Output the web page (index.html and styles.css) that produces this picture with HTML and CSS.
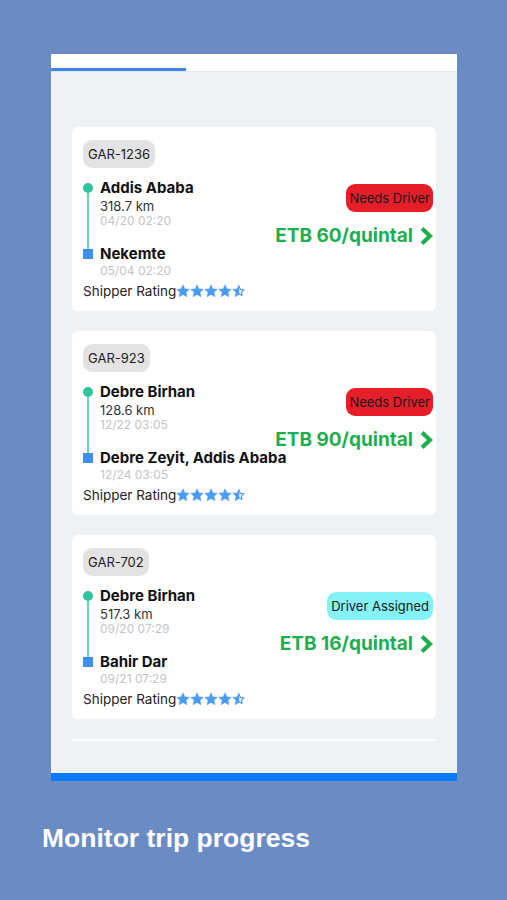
FILE: index.html
```html
<!DOCTYPE html>
<html>
  <head>
    <title>Monitor trip progress</title>
    <link rel="stylesheet" href="styles.css">
  </head>
  <body>
    <svg width="0" height="0" class="defs">
      <defs>
        <symbol id="star" viewBox="0 0 24 24">
          <path d="M12 1.5l3.2 6.9 7.5.8-5.6 5.1 1.6 7.4L12 17.9l-6.6 3.8 1.6-7.4-5.6-5.1 7.5-.8z" />
        </symbol>
        <symbol id="half-star" viewBox="0 0 24 24">
          <path d="M12 1.5v16.4l-6.6 3.8 1.6-7.4-5.6-5.1 7.5-.8z" />
          <path d="M12 3.9l2.5 5.4 5.9.6-4.4 4 1.3 5.8L12 16.8" fill="none" stroke-width="2" stroke-linejoin="round" />
        </symbol>
      </defs>
    </svg>

    <div class="screen">
      <div class="tabs">
        <div class="tab-indicator"></div>
      </div>

      <div class="content">
        <div class="trip-card">
          <div class="trip-left">
            <span class="trip-tag">GAR-1236</span>
            <div class="route">
              <div class="route-marks">
                <span class="mark-start"></span>
                <span class="mark-line"></span>
                <span class="mark-end"></span>
              </div>
              <div class="route-stops">
                <div class="stop-name">Addis Ababa</div>
                <div class="stop-km">318.7 km</div>
                <div class="stop-date">04/20 02:20</div>
                <div class="stop-name stop-dest">Nekemte</div>
                <div class="stop-date">05/04 02:20</div>
              </div>
            </div>
            <div class="rating">
              Shipper Rating
              <span class="stars">
                <svg><use href="#star" /></svg><svg><use href="#star" /></svg><svg><use href="#star" /></svg><svg><use href="#star" /></svg><svg><use href="#half-star" /></svg>
              </span>
            </div>
          </div>
          <div class="trip-right">
            <span class="status status-needs">Needs Driver</span>
            <div class="price">
              ETB 60/quintal
              <svg class="chevron" viewBox="0 0 14 20"><polyline points="3,2.5 11,10 3,17.5" /></svg>
            </div>
          </div>
        </div>

        <div class="trip-card">
          <div class="trip-left">
            <span class="trip-tag">GAR-923</span>
            <div class="route">
              <div class="route-marks">
                <span class="mark-start"></span>
                <span class="mark-line"></span>
                <span class="mark-end"></span>
              </div>
              <div class="route-stops">
                <div class="stop-name">Debre Birhan</div>
                <div class="stop-km">128.6 km</div>
                <div class="stop-date">12/22 03:05</div>
                <div class="stop-name stop-dest">Debre Zeyit, Addis Ababa</div>
                <div class="stop-date">12/24 03:05</div>
              </div>
            </div>
            <div class="rating">
              Shipper Rating
              <span class="stars">
                <svg><use href="#star" /></svg><svg><use href="#star" /></svg><svg><use href="#star" /></svg><svg><use href="#star" /></svg><svg><use href="#half-star" /></svg>
              </span>
            </div>
          </div>
          <div class="trip-right">
            <span class="status status-needs">Needs Driver</span>
            <div class="price">
              ETB 90/quintal
              <svg class="chevron" viewBox="0 0 14 20"><polyline points="3,2.5 11,10 3,17.5" /></svg>
            </div>
          </div>
        </div>

        <div class="trip-card">
          <div class="trip-left">
            <span class="trip-tag">GAR-702</span>
            <div class="route">
              <div class="route-marks">
                <span class="mark-start"></span>
                <span class="mark-line"></span>
                <span class="mark-end"></span>
              </div>
              <div class="route-stops">
                <div class="stop-name">Debre Birhan</div>
                <div class="stop-km">517.3 km</div>
                <div class="stop-date">09/20 07:29</div>
                <div class="stop-name stop-dest">Bahir Dar</div>
                <div class="stop-date">09/21 07:29</div>
              </div>
            </div>
            <div class="rating">
              Shipper Rating
              <span class="stars">
                <svg><use href="#star" /></svg><svg><use href="#star" /></svg><svg><use href="#star" /></svg><svg><use href="#star" /></svg><svg><use href="#half-star" /></svg>
              </span>
            </div>
          </div>
          <div class="trip-right">
            <span class="status status-assigned">Driver Assigned</span>
            <div class="price">
              ETB 16/quintal
              <svg class="chevron" viewBox="0 0 14 20"><polyline points="3,2.5 11,10 3,17.5" /></svg>
            </div>
          </div>
        </div>

        <div class="list-end"></div>
      </div>

      <div class="bottom-bar"></div>
    </div>

    <h2 class="caption">Monitor trip progress</h2>
  </body>
</html>
```

FILE: styles.css
```css
/* App store screenshot: trip list */
body {
  margin: 0;
  background-color: #6b8bc3;
  font-family: Inter, "Noto Sans", sans-serif;
  color: #111;
}
.defs {
  position: absolute;
}
.screen {
  width: 406px;
  height: 727px;
  margin: 54px 0 0 51px;
  background-color: #eff2f5;
  display: flex;
  flex-direction: column;
}
.tabs {
  height: 17px;
  background-color: #fff;
  border-bottom: 1px solid #e2e6ea;
  display: flex;
  align-items: flex-end;
}
.tab-indicator {
  width: 135px;
  height: 3px;
  background-color: #3a85e8;
}
.content {
  flex: 1;
  padding: 55px 21px 0;
}
.trip-card {
  display: flex;
  justify-content: space-between;
  height: 184px;
  box-sizing: border-box;
  padding: 13px 3px 12px 11px;
  margin-bottom: 20px;
  background-color: #fff;
  border-radius: 6px;
}
.trip-left {
  flex: 1;
  min-width: 0;
  display: flex;
  flex-direction: column;
  align-items: flex-start;
}
.trip-tag {
  height: 28px;
  line-height: 28px;
  padding: 0 5px;
  border-radius: 9px;
  background-color: #e3e3e3;
  font-size: 13px;
  color: #222;
}
.route {
  display: flex;
  margin-top: 10px;
}
.route-marks {
  width: 17px;
  flex-shrink: 0;
  display: flex;
  flex-direction: column;
  padding: 5px 0 19px;
}
.mark-start {
  width: 10px;
  height: 10px;
  border-radius: 50%;
  background-color: #2fc49a;
}
.mark-line {
  flex: 1;
  width: 2px;
  margin-left: 4px;
  background-color: #66d3b3;
}
.mark-end {
  width: 10px;
  height: 10px;
  background-color: #3d8ef0;
}
.stop-name {
  font-size: 15px;
  font-weight: 700;
  line-height: 20px;
  white-space: nowrap;
}
.stop-dest {
  margin-top: 16px;
}
.stop-km {
  font-size: 13px;
  line-height: 16px;
  color: #333;
}
.stop-date {
  font-size: 12px;
  line-height: 14px;
  color: #c4c4c4;
}
.rating {
  display: flex;
  align-items: center;
  margin-top: 5px;
  font-size: 13.5px;
  line-height: 16px;
  color: #222;
  white-space: nowrap;
}
.stars {
  display: flex;
}
.stars svg {
  width: 14px;
  height: 14px;
  fill: #4a9bf5;
  stroke: #4a9bf5;
}
.trip-right {
  flex-shrink: 0;
  display: flex;
  flex-direction: column;
  align-items: flex-end;
  padding-top: 44px;
}
.status {
  height: 28px;
  line-height: 28px;
  padding: 0 3px;
  border-radius: 9px;
  font-size: 13px;
  color: #1a1a1a;
}
.status-needs {
  background-color: #e61e29;
}
.status-assigned {
  background-color: #84f2f6;
  padding: 0 4px;
}
.price {
  display: flex;
  align-items: center;
  margin-top: 12px;
  line-height: 24px;
  font-size: 19px;
  font-weight: 700;
  color: #1fae4f;
  white-space: nowrap;
}
.chevron {
  width: 14px;
  height: 20px;
  margin-left: 6px;
  fill: none;
  stroke: #1fae4f;
  stroke-width: 4.2;
}
.list-end {
  height: 2px;
  background-color: #fbfcfd;
}
.bottom-bar {
  height: 8px;
  background-color: #0a7aff;
}
.caption {
  margin: 43px 0 0 42px;
  font-family: "Liberation Sans", Arial, sans-serif;
  font-size: 26.5px;
  line-height: 28px;
  font-weight: 700;
  color: #fff;
}
```
